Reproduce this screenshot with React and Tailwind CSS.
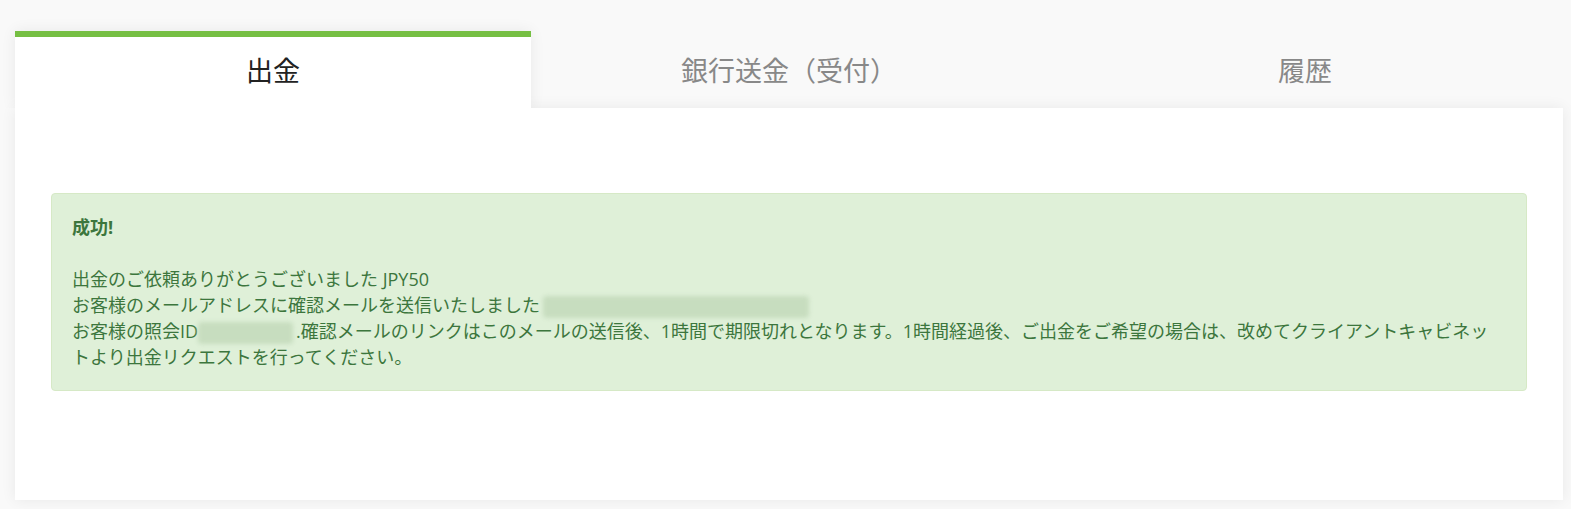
import React from 'react';

const tabs = ['出金', '銀行送金（受付）', '履歴'];

const Redacted = ({ className }) => (
  <span className={`inline-block align-middle h-[22px] bg-[#c7ddbf] blur-[2px] rounded-sm ${className}`} />
);

const App = () => {
  return (
    <div className="min-h-[509px] bg-[#f9f9f9] pl-[15px] pr-[8px] pt-[31px] pb-[9px] font-['Open_Sans','Noto_Sans_CJK_JP',sans-serif]">
      <div className="relative z-10 flex">
        {tabs.map((t, i) => (
          <div
            key={t}
            className={
              i === 0
                ? 'flex-1 h-[77px] pb-[2px] border-t-[6px] border-[#76bf43] bg-white text-[#222] text-[27px] flex items-center justify-center shadow-[0_0_14px_rgba(0,0,0,0.07)] [clip-path:inset(-20px_-20px_0px_-20px)]'
                : 'flex-1 h-[77px] pb-[2px] border-t-[6px] border-transparent text-[#888] text-[27px] flex items-center justify-center'
            }
          >
            {t}
          </div>
        ))}
      </div>

      <div className="h-[392px] bg-white shadow-[0_0_14px_rgba(0,0,0,0.07)] pt-[85px] px-[36px]">
        <div className="bg-[#dff0d8] border border-[#d6e9c6] rounded text-[#3c763d] text-[18px] leading-[26px] p-[20px]">
          <p className="font-bold">成功!</p>
          <br />
          <p>出金のご依頼ありがとうございました JPY50</p>
          <p>
            お客様のメールアドレスに確認メールを送信いたしました<Redacted className="w-[266px] ml-[3px]" />
          </p>
          <p>
            お客様の照会ID<Redacted className="w-[95px] mr-[3px]" />.確認メールのリンクはこのメールの送信後、1時間で期限切れとなります。1時間経過後、ご出金をご希望の場合は、改めてクライアントキャビネッ
            <br />
            トより出金リクエストを行ってください。
          </p>
        </div>
      </div>
    </div>
  );
};

export default App;
